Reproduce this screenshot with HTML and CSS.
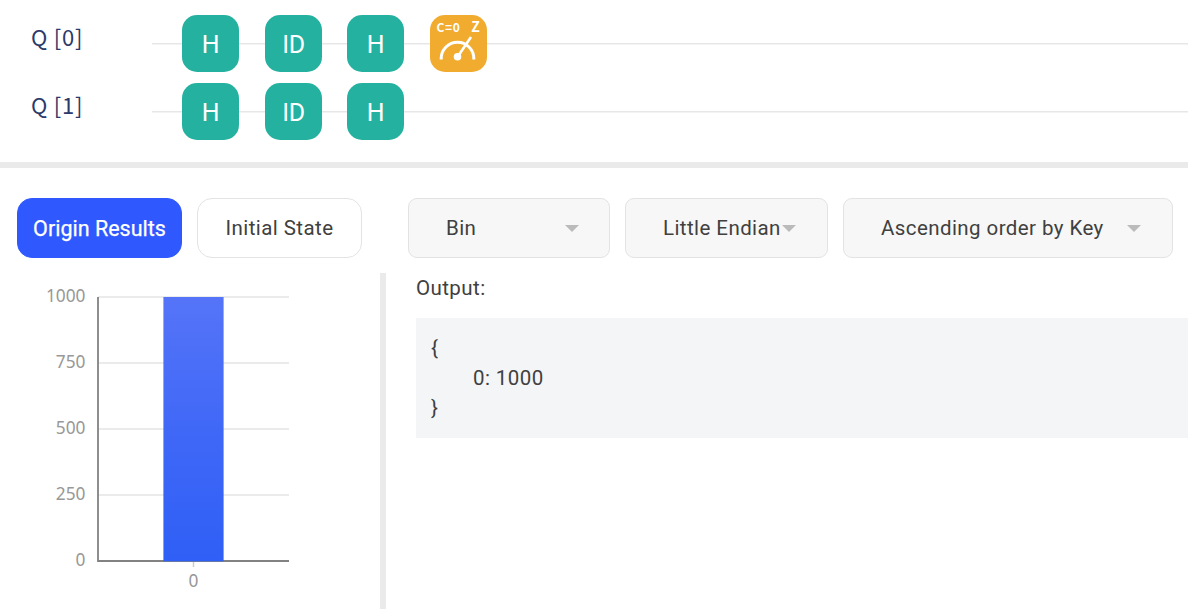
FILE: index.html
```html
<!DOCTYPE html>
<html lang="en">
<head>
<meta charset="utf-8">
<title>Quantum circuit results</title>
<link rel="stylesheet" href="styles.css">
</head>
<body>
<main class="page">
  <section class="circuit">
    <div class="qubit">
      <span class="qubit-name">Q [0]</span>
      <div class="wire">
        <span class="gate"><span>H</span></span>
        <span class="gate"><span>ID</span></span>
        <span class="gate"><span>H</span></span>
        <span class="gate measure">
          <span class="measure-labels"><b>C=0</b><b class="basis">Z</b></span>
          <svg class="meter" width="38" height="26" viewBox="0 0 38 26">
            <path d="M2.2 23.5v-1a16.3 16.3 0 0 1 32.6 0v1" fill="none" stroke="#fff" stroke-width="3"/>
            <path d="M18.5 21L32 1" stroke="#fff" stroke-width="2.6"/>
            <circle cx="18.5" cy="20.7" r="3.8" fill="#fff"/>
          </svg>
        </span>
      </div>
    </div>
    <div class="qubit">
      <span class="qubit-name">Q [1]</span>
      <div class="wire">
        <span class="gate"><span>H</span></span>
        <span class="gate"><span>ID</span></span>
        <span class="gate"><span>H</span></span>
      </div>
    </div>
  </section>

  <section class="toolbar">
    <button class="tab tab-active"><span>Origin Results</span></button>
    <button class="tab"><span>Initial State</span></button>
    <div class="select select-base"><span>Bin</span><i class="caret"></i></div>
    <div class="select select-endian"><span>Little Endian</span><i class="caret"></i></div>
    <div class="select select-order"><span>Ascending order by Key</span><i class="caret"></i></div>
  </section>

  <section class="results">
    <div class="chart-pane">
      <svg class="chart" width="380" height="336" viewBox="0 273 380 336">
        <defs>
          <linearGradient id="bar" x1="0" y1="0" x2="0" y2="1">
            <stop offset="0" stop-color="#5574f8"/>
            <stop offset="0.5" stop-color="#4068f7"/>
            <stop offset="1" stop-color="#2f5ff6"/>
          </linearGradient>
        </defs>
        <path class="grid-line" d="M98 297H289M98 363H289M98 429H289M98 495H289"/>
        <path class="tick" d="M193.5 561V567"/>
        <path class="axis" d="M98 297V561H289"/>
        <rect x="163.4" y="297" width="60.2" height="264.3" fill="url(#bar)"/>
        <g class="y-labels">
          <text x="85.5" y="302">1000</text>
          <text x="85.5" y="368">750</text>
          <text x="85.5" y="434">500</text>
          <text x="85.5" y="500">250</text>
          <text x="85.5" y="566">0</text>
        </g>
        <text class="x-label" x="193.5" y="587">0</text>
      </svg>
    </div>
    <div class="output">
      <div class="output-title">Output:</div>
      <div class="code">
        <div>{</div>
        <div class="entry">0: 1000</div>
        <div>}</div>
      </div>
    </div>
  </section>
</main>
</body>
</html>
```

FILE: styles.css
```css
* { box-sizing: border-box; }
body {
  margin: 0;
  background: #fff;
  color: #404040;
  font: 400 20.5px/30px Roboto, sans-serif;
  letter-spacing: 0.42px;
}
.page { height: 609px; display: flex; flex-direction: column; overflow: hidden; }

.circuit {
  height: 168px;
  flex: none;
  padding-top: 10px;
  border-bottom: 6px solid #eaeaea;
}
.qubit { display: flex; height: 67.4px; align-items: center; }
.qubit-name {
  width: 152px;
  padding: 0 0 15px 31px;
  color: #2a3a6a;
  font: 400 22px/30px "Noto Sans CJK SC", "Noto Sans", sans-serif;
  letter-spacing: 0.8px;
}
.wire {
  flex: 1;
  height: 67px;
  display: flex;
  align-items: center;
  gap: 25.5px;
  padding-left: 30px;
  background: linear-gradient(#e7e7e7, #e7e7e7) 0 33px / 100% 1.5px no-repeat;
}
.gate {
  width: 57px;
  height: 57px;
  border-radius: 15px;
  background: #25b1a0;
  color: #fff;
  font: 26.5px/57px Roboto, sans-serif;
  letter-spacing: -0.3px;
  text-align: center;
}
.gate > span { display: block; }
.gate:not(.measure) > span { transform: scaleX(0.94); }
.gate.measure {
  display: flex;
  flex-direction: column;
  align-items: center;
  background: #f1ac2f;
}
.gate .measure-labels {
  display: flex;
  justify-content: space-between;
  width: 100%;
  padding: 4px 6px 1px 7px;
  font: 600 12px/15px "Noto Sans CJK SC", "Noto Sans", sans-serif;
  letter-spacing: 0.6px;
}
.measure-labels b { font-weight: 600; }
.measure-labels .basis { font-size: 14px; font-weight: 700; }
.meter { display: block; margin-top: 1px; }

.toolbar { display: flex; flex: none; padding: 30px 15px 15px 17px; }
.tab, .select {
  height: 60px;
  border: 1px solid #e3e3e3;
  font: inherit;
  color: inherit;
  letter-spacing: inherit;
}
.tab {
  width: 165px;
  padding: 0;
  margin-right: 15px;
  border-radius: 15px;
  background: #fff;
}
.tab-active {
  background: #2f59ff;
  border-color: #2f59ff;
  color: #fff;
  font-size: 21.5px;
  font-weight: 400;
  letter-spacing: 0;
}
.tab-active span { display: block; padding-top: 1px; -webkit-text-stroke: 0.25px #fff; }
.select {
  display: flex;
  align-items: center;
  justify-content: space-between;
  padding: 0 30px 0 37px;
  border-radius: 9px;
  background: #f7f7f7;
  white-space: nowrap;
}
.caret {
  border: 7.5px solid transparent;
  border-top-color: #bbb;
  border-bottom: 0;
}
.select-base { width: 202px; margin: 0 15px 0 31px; }
.select-endian { width: 203px; margin-right: 15px; }
.select-endian .caret { margin-right: 1px; }
.select-order { width: 330px; padding-right: 31px; }

.results { flex: 1; display: flex; min-height: 0; }
.chart-pane { width: 386px; border-right: 6px solid #eaeaea; }
.chart { display: block; }
.grid-line { stroke: #e5e5e5; stroke-width: 1.6; }
.axis { fill: none; stroke: #828282; stroke-width: 1.8; }
.tick { stroke: #ccc; stroke-width: 1.5; }
.chart text {
  fill: #989898;
  font: 17.3px "Noto Sans", sans-serif;
  letter-spacing: 0;
}
.y-labels { text-anchor: end; }
.x-label { text-anchor: middle; }
.output { flex: 1; padding-left: 30px; }
.output-title { height: 45px; }
.code { height: 120px; padding: 15px; background: #f4f5f7; }
.entry { padding-left: 42px; }
```
